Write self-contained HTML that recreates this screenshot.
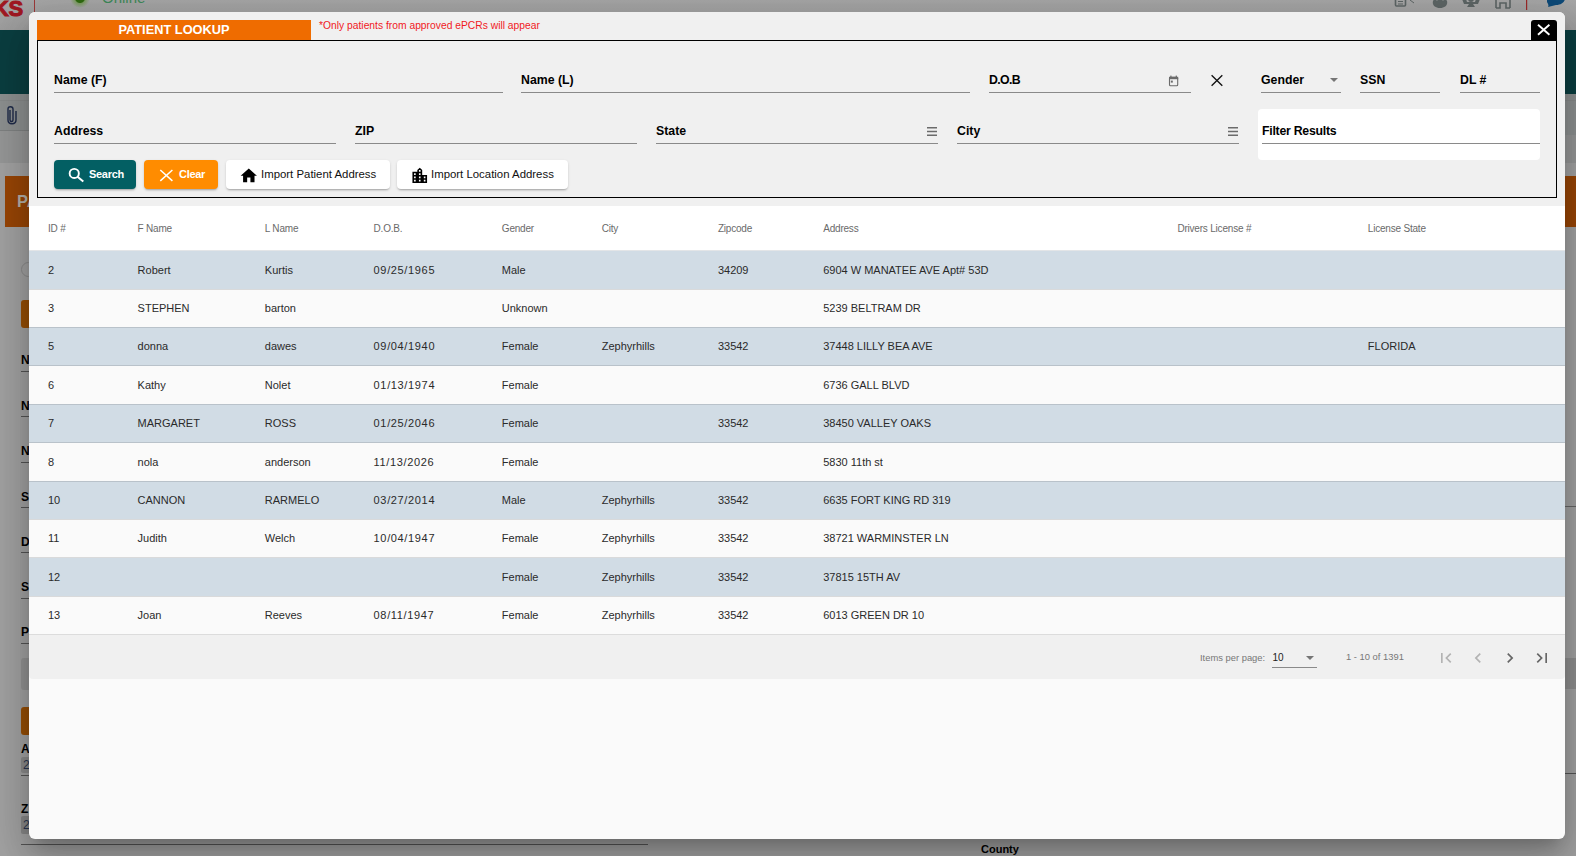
<!DOCTYPE html>
<html><head><meta charset="utf-8">
<style>
*{box-sizing:border-box;margin:0;padding:0}
html,body{width:1576px;height:856px;overflow:hidden}
body{position:relative;font-family:"Liberation Sans",sans-serif;background:#a2a2a2;color:#000}
.a{position:absolute}
.lbl{position:absolute;font-weight:bold;font-size:12.3px;line-height:14px;color:#000;white-space:nowrap}
.ul{position:absolute;height:1px;background:#8a8a8a}
.hd{position:absolute;font-size:10px;line-height:12px;color:#6a6a6a;letter-spacing:-0.2px;white-space:nowrap}
.row{position:absolute;left:29px;width:1536px}
.row.b{background:#d1dce5}
.row.w{background:#fafafa}
.c{position:absolute;font-size:11px;line-height:13px;color:#2a2a2a;white-space:nowrap}
.btn{position:absolute;top:160px;height:29px;border-radius:4px;box-shadow:0 2px 2px -1px rgba(0,0,0,.25),0 1px 3px rgba(0,0,0,.12)}
.bt{position:absolute;top:168px;font-weight:bold;font-size:11px;line-height:12px;letter-spacing:-0.3px;white-space:nowrap}
.it{position:absolute;top:168px;font-size:11.4px;line-height:12px;color:#111;white-space:nowrap}
.ic{position:absolute}
.bl{position:absolute;left:21px;font-weight:bold;font-size:12px;line-height:12px;color:#000}
.bu{position:absolute;left:21px;width:10px;height:1px;background:#555}
</style></head>
<body>
<!-- background page -->
<div id="bg">
  <div class="a" style="left:0;top:0;width:1576px;height:30px;background:linear-gradient(#a7a7a7,#9d9d9d)"></div>
  <div class="a" style="left:-7px;top:-2px;font-weight:bold;font-size:22px;line-height:22px;color:#a01822;-webkit-text-stroke:1px #a01822;letter-spacing:-0.5px">KS</div>
  <div class="a" style="left:34px;top:0;width:1px;height:14px;background:#9c3a3a"></div>
  <div class="a" style="left:70px;top:-12px;width:20px;height:20px;border-radius:50%;background:radial-gradient(circle,#2f6a10 0,#2f6a10 4.5px,rgba(90,150,40,.5) 5.5px,rgba(160,160,160,0) 10px)"></div>
  <div class="a" style="left:102px;top:-10px;font-size:15px;line-height:15px;color:#3f8a5a">Online</div>
  <svg class="a" style="left:1390px;top:0" width="180" height="10" viewBox="0 0 180 10">
    <rect x="5.5" y="-2" width="10" height="8" rx="1" fill="none" stroke="#5d6565" stroke-width="1.6"/><path d="M8 1.5h5M8 4h5" stroke="#5d6565" stroke-width="1.2"/>
    <path d="M20 0l4 3" stroke="#5d6565" stroke-width="1"/>
    <path d="M50 8c-5 0-8-3-7-7l2-3 2 3 3-5 3 5 2-3 2 3c1 4-2 7-7 7z" fill="#5d6565"/>
    <path d="M72 -1h4l1 3h8l1-3h4l-2 5h-5l2 3h-8l2-3h-5z" fill="#5d6565"/><circle cx="81" cy="-1" r="3" fill="#5d6565"/>
    <path d="M106 8v-9M120 8v-9M106 8h4v-5h6v5h4" fill="none" stroke="#5d6565" stroke-width="1.6"/>
    <rect x="136" y="0" width="1.2" height="12" fill="#9c2a2a"/>
    <path d="M157 -4h18c1 4-2 9-9 9l-8 2c1-2 0-3-1-5z" fill="#0e4a78"/>
  </svg>
  <div class="a" style="left:0;top:30px;width:1576px;height:64px;background:#0b3e40"></div>
  <div class="a" style="left:0;top:94px;width:1576px;height:36px;background:#8d9090"></div>
  <div class="a" style="left:0;top:100px;width:1576px;height:1px;background:#878a8a"></div>
  <div class="a" style="left:0;top:130px;width:1576px;height:1px;background:#7f8282"></div>
  <svg class="a" style="left:5px;top:105px" width="13" height="21" viewBox="0 0 13 21"><path d="M5 5v10c0 2 3 2 3 0V4c0-3-5-3-5 0v11c0 5 8 5 8 0V6" fill="none" stroke="#1e2a48" stroke-width="1.4"/></svg>
  <div class="a" style="left:0;top:131px;width:1576px;height:32px;background:#969797"></div>
  <div class="a" style="left:5px;top:176px;width:30px;height:51px;background:#984506"></div>
  <div class="a" style="left:17px;top:193px;font-weight:bold;font-size:16.5px;line-height:16.5px;color:#b5b0a8">PA</div>
  <div class="a" style="left:1565px;top:176px;width:20px;height:51px;background:#984506"></div>
  <div class="a" style="left:1565px;top:130px;width:11px;height:5px;background:#8d9090"></div>
  <div class="a" style="left:21px;top:262px;width:15px;height:15px;border-radius:50%;border:1.5px solid #8a8a8a"></div>
  <div class="a" style="left:21px;top:300px;width:20px;height:28px;background:#964e06;border-radius:3px"></div>
  <div class="bl" style="top:354px">N</div><div class="bu" style="top:371px"></div>
  <div class="bl" style="top:399.5px">N</div><div class="bu" style="top:416px"></div>
  <div class="bl" style="top:445.3px">N</div><div class="bu" style="top:462px"></div>
  <div class="bl" style="top:490.5px">S</div><div class="bu" style="top:507px"></div>
  <div class="bl" style="top:536.2px">D</div><div class="bu" style="top:552px"></div>
  <div class="bl" style="top:581.2px">S</div><div class="bu" style="top:598px"></div>
  <div class="bl" style="top:626.4px">P</div><div class="bu" style="top:643px"></div>
  <div class="a" style="left:21px;top:658px;width:20px;height:32px;background:#929292;border-radius:3px"></div>
  <div class="a" style="left:21px;top:707px;width:20px;height:28px;background:#964e06;border-radius:3px"></div>
  <div class="bl" style="top:742.8px">A</div>
  <div class="a" style="left:21px;top:757px;width:20px;height:16px;background:#8a8a8a;border-radius:2px"></div>
  <div class="a" style="left:23px;top:758px;font-size:12px;line-height:14px;color:#2a3550">2</div>
  <div class="bu" style="top:774.5px"></div>
  <div class="bl" style="top:802.6px">Z</div>
  <div class="a" style="left:21px;top:816px;width:20px;height:18px;background:#868686;border-radius:2px"></div>
  <div class="a" style="left:23px;top:818px;font-size:12px;line-height:14px;color:#2a3550">2</div>
  <div class="a" style="left:21px;top:844px;width:627px;height:1px;background:#555"></div>
  <div class="a" style="left:981px;top:843px;font-weight:bold;font-size:11px;line-height:13px;color:#000">County</div>
  <div class="a" style="left:1565px;top:658px;width:11px;height:31px;background:#8e8e8e"></div>
  <div class="a" style="left:1565px;top:773px;width:11px;height:1px;background:#555"></div>
  <div class="a" style="left:1565px;top:506px;width:11px;height:1px;background:#666"></div>
</div>

<!-- modal -->
<div class="a" id="modal" style="left:29px;top:12px;width:1536px;height:827px;background:#fafafa;border-radius:6px;box-shadow:0 11px 15px -7px rgba(0,0,0,.2),0 24px 38px 3px rgba(0,0,0,.14),0 9px 46px 8px rgba(0,0,0,.12)"></div>
<div class="a" style="left:29px;top:12px;width:1536px;height:194px;background:#f0f0f0;border-radius:6px 6px 0 0"></div>

<!-- title -->
<div class="a" style="left:37px;top:20px;width:274px;height:20px;background:#ef6c00;color:#fff;font-weight:bold;font-size:12.8px;line-height:20px;text-align:center">PATIENT LOOKUP</div>
<div class="a" style="left:319px;top:19px;font-size:10.3px;line-height:13px;color:#f01a24;white-space:nowrap">*Only patients from approved ePCRs will appear</div>
<div class="a" style="left:1531px;top:20px;width:26px;height:20px;background:#000;border-radius:3px 3px 0 0"></div>
<svg class="a" style="left:1531px;top:20px" width="26" height="20" viewBox="0 0 26 20"><path d="M7 4.7 L18.4 14.7 M18.4 4.7 L7 14.7" stroke="#fff" stroke-width="1.9" fill="none"/></svg>

<!-- form box -->
<div class="a" style="left:37px;top:40px;width:1520px;height:158px;border:1.3px solid #000"></div>

<!-- row 1 fields -->
<div class="lbl" style="left:54px;top:73px">Name (F)</div><div class="ul" style="left:54px;top:92px;width:449px"></div>
<div class="lbl" style="left:521px;top:73px">Name (L)</div><div class="ul" style="left:521px;top:92px;width:449px"></div>
<div class="lbl" style="left:989px;top:73px;letter-spacing:-0.65px">D.O.B</div><div class="ul" style="left:989px;top:92px;width:202px"></div>
<div class="lbl" style="left:1261px;top:73px">Gender</div><div class="ul" style="left:1261px;top:92px;width:80px"></div>
<div class="lbl" style="left:1360px;top:73px">SSN</div><div class="ul" style="left:1360px;top:92px;width:80px"></div>
<div class="lbl" style="left:1460px;top:73px">DL #</div><div class="ul" style="left:1460px;top:92px;width:80px"></div>

<!-- row 2 fields -->
<div class="lbl" style="left:54px;top:124px">Address</div><div class="ul" style="left:54px;top:143px;width:282px"></div>
<div class="lbl" style="left:355px;top:124px">ZIP</div><div class="ul" style="left:355px;top:143px;width:282px"></div>
<div class="lbl" style="left:656px;top:124px">State</div><div class="ul" style="left:656px;top:143px;width:282px"></div>
<div class="lbl" style="left:957px;top:124px">City</div><div class="ul" style="left:957px;top:143px;width:282px"></div>
<div class="a" style="left:1258px;top:109px;width:282px;height:51px;background:#fff;border-radius:4px"></div>
<div class="lbl" style="left:1262px;top:124px;letter-spacing:-0.25px">Filter Results</div><div class="ul" style="left:1262px;top:143px;width:278px"></div>


<!-- field icons -->
<svg class="a" style="left:1168px;top:74.6px" width="11" height="12" viewBox="0 0 11 12"><rect x="1.5" y="2.2" width="8.2" height="8.6" rx="1" fill="none" stroke="#6b6b6b" stroke-width="1.1"/><rect x="1" y="1.8" width="9.2" height="2.4" fill="#6b6b6b"/><rect x="2.3" y="0.6" width="1.2" height="2" fill="#6b6b6b"/><rect x="7.7" y="0.6" width="1.2" height="2" fill="#6b6b6b"/><rect x="2.8" y="5.6" width="2" height="2" fill="#6b6b6b"/></svg>
<svg class="a" style="left:1210px;top:74px" width="14" height="13" viewBox="0 0 14 13"><path d="M1.6 1.3 L12.3 11.7 M12.3 1.3 L1.6 11.7" stroke="#111" stroke-width="1.35" fill="none"/></svg>
<div class="a" style="left:1329.5px;top:77.7px;width:0;height:0;border-left:4.3px solid transparent;border-right:4.3px solid transparent;border-top:4.4px solid #757575"></div>
<svg class="a" style="left:926px;top:126px" width="12" height="11" viewBox="0 0 12 11"><path d="M1 1.7H11M1 5.5H11M1 9.2H11" stroke="#6b6b6b" stroke-width="1.5"/></svg>
<svg class="a" style="left:1227px;top:126px" width="12" height="11" viewBox="0 0 12 11"><path d="M1 1.7H11M1 5.5H11M1 9.2H11" stroke="#6b6b6b" stroke-width="1.5"/></svg>
<!-- buttons -->
<div class="btn" style="left:54px;width:82px;background:#035f63"></div>
<div class="btn" style="left:144px;width:74px;background:#ff8c00"></div>
<div class="btn" style="left:226px;width:164px;background:#fff"></div>
<div class="btn" style="left:397px;width:171px;background:#fff"></div>
<svg class="a" style="left:66px;top:166px" width="20" height="18" viewBox="0 0 20 18"><circle cx="8.25" cy="7.45" r="4.6" fill="none" stroke="#fff" stroke-width="1.9"/><path d="M11.5 10.7 L17.3 15.6" stroke="#fff" stroke-width="2" fill="none"/></svg>
<div class="bt" style="left:89px;color:#fff">Search</div>
<svg class="a" style="left:158px;top:168px" width="16" height="15" viewBox="0 0 16 15"><path d="M2.3 2 L14.4 12.9 M14.4 2 L2.3 12.9" stroke="#fff" stroke-width="1.5" fill="none"/></svg>
<div class="bt" style="left:179px;color:#fff">Clear</div>
<svg class="a" style="left:238.5px;top:165.9px" width="19.6" height="19.6" viewBox="0 0 24 24"><path d="M10 20v-6h4v6h5v-8h3L12 3 2 12h3v8z" fill="#000"/></svg>
<div class="it" style="left:261px">Import Patient Address</div>
<svg class="a" style="left:409.7px;top:166.4px" width="19.5" height="19.5" viewBox="0 0 24 24"><path d="M15 11V5l-3-3-3 3v2H3v14h18V11h-6zm-8 8H5v-2h2v2zm0-4H5v-2h2v2zm0-4H5V9h2v2zm6 8h-2v-2h2v2zm0-4h-2v-2h2v2zm0-4h-2V9h2v2zm0-4h-2V5h2v2zm6 12h-2v-2h2v2zm0-4h-2v-2h2v2z" fill="#000"/></svg>
<div class="it" style="left:431px">Import Location Address</div>

<!-- table header -->
<div class="a" style="left:29px;top:206px;width:1536px;height:44.3px;background:#fff"></div>

<!-- header cells -->
<div class="hd" style="left:48px;top:223px">ID #</div>
<div class="hd" style="left:137.6px;top:223px">F Name</div>
<div class="hd" style="left:264.8px;top:223px">L Name</div>
<div class="hd" style="left:373.6px;top:223px">D.O.B.</div>
<div class="hd" style="left:501.8px;top:223px">Gender</div>
<div class="hd" style="left:601.7px;top:223px">City</div>
<div class="hd" style="left:717.9px;top:223px">Zipcode</div>
<div class="hd" style="left:823.2px;top:223px">Address</div>
<div class="hd" style="left:1177.4px;top:223px">Drivers License #</div>
<div class="hd" style="left:1367.8px;top:223px">License State</div>
<div class="a" style="left:29px;top:250px;width:1536px;height:1px;background:#e3e5e7"></div>
<div class="row b" style="top:251px;height:38px"></div>
<div class="a" style="left:29px;top:289px;width:1536px;height:1px;background:#d9dadb"></div>
<div class="c" style="left:48px;top:263.8px">2</div>
<div class="c" style="left:137.6px;top:263.8px">Robert</div>
<div class="c" style="left:264.8px;top:263.8px">Kurtis</div>
<div class="c" style="left:373.6px;top:263.8px;letter-spacing:0.65px">09/25/1965</div>
<div class="c" style="left:501.8px;top:263.8px">Male</div>
<div class="c" style="left:717.9px;top:263.8px">34209</div>
<div class="c" style="left:823.2px;top:263.8px">6904 W MANATEE AVE Apt# 53D</div>
<div class="row w" style="top:290px;height:37px"></div>
<div class="a" style="left:29px;top:327px;width:1536px;height:1px;background:#b9c2ca"></div>
<div class="c" style="left:48px;top:302.3px">3</div>
<div class="c" style="left:137.6px;top:302.3px">STEPHEN</div>
<div class="c" style="left:264.8px;top:302.3px">barton</div>
<div class="c" style="left:501.8px;top:302.3px">Unknown</div>
<div class="c" style="left:823.2px;top:302.3px">5239 BELTRAM DR</div>
<div class="row b" style="top:328px;height:37px"></div>
<div class="a" style="left:29px;top:365px;width:1536px;height:1px;background:#b9c2ca"></div>
<div class="c" style="left:48px;top:340.3px">5</div>
<div class="c" style="left:137.6px;top:340.3px">donna</div>
<div class="c" style="left:264.8px;top:340.3px">dawes</div>
<div class="c" style="left:373.6px;top:340.3px;letter-spacing:0.65px">09/04/1940</div>
<div class="c" style="left:501.8px;top:340.3px">Female</div>
<div class="c" style="left:601.7px;top:340.3px">Zephyrhills</div>
<div class="c" style="left:717.9px;top:340.3px">33542</div>
<div class="c" style="left:823.2px;top:340.3px">37448 LILLY BEA AVE</div>
<div class="c" style="left:1367.8px;top:340.3px">FLORIDA</div>
<div class="row w" style="top:366px;height:38px"></div>
<div class="a" style="left:29px;top:404px;width:1536px;height:1px;background:#b9c2ca"></div>
<div class="c" style="left:48px;top:378.8px">6</div>
<div class="c" style="left:137.6px;top:378.8px">Kathy</div>
<div class="c" style="left:264.8px;top:378.8px">Nolet</div>
<div class="c" style="left:373.6px;top:378.8px;letter-spacing:0.65px">01/13/1974</div>
<div class="c" style="left:501.8px;top:378.8px">Female</div>
<div class="c" style="left:823.2px;top:378.8px">6736 GALL BLVD</div>
<div class="row b" style="top:405px;height:37px"></div>
<div class="a" style="left:29px;top:442px;width:1536px;height:1px;background:#b9c2ca"></div>
<div class="c" style="left:48px;top:417.3px">7</div>
<div class="c" style="left:137.6px;top:417.3px">MARGARET</div>
<div class="c" style="left:264.8px;top:417.3px">ROSS</div>
<div class="c" style="left:373.6px;top:417.3px;letter-spacing:0.65px">01/25/2046</div>
<div class="c" style="left:501.8px;top:417.3px">Female</div>
<div class="c" style="left:717.9px;top:417.3px">33542</div>
<div class="c" style="left:823.2px;top:417.3px">38450 VALLEY OAKS</div>
<div class="row w" style="top:443px;height:38px"></div>
<div class="a" style="left:29px;top:481px;width:1536px;height:1px;background:#b9c2ca"></div>
<div class="c" style="left:48px;top:455.8px">8</div>
<div class="c" style="left:137.6px;top:455.8px">nola</div>
<div class="c" style="left:264.8px;top:455.8px">anderson</div>
<div class="c" style="left:373.6px;top:455.8px;letter-spacing:0.65px">11/13/2026</div>
<div class="c" style="left:501.8px;top:455.8px">Female</div>
<div class="c" style="left:823.2px;top:455.8px">5830 11th st</div>
<div class="row b" style="top:482px;height:37px"></div>
<div class="a" style="left:29px;top:519px;width:1536px;height:1px;background:#d9dadb"></div>
<div class="c" style="left:48px;top:494.3px">10</div>
<div class="c" style="left:137.6px;top:494.3px">CANNON</div>
<div class="c" style="left:264.8px;top:494.3px">RARMELO</div>
<div class="c" style="left:373.6px;top:494.3px;letter-spacing:0.65px">03/27/2014</div>
<div class="c" style="left:501.8px;top:494.3px">Male</div>
<div class="c" style="left:601.7px;top:494.3px">Zephyrhills</div>
<div class="c" style="left:717.9px;top:494.3px">33542</div>
<div class="c" style="left:823.2px;top:494.3px">6635 FORT KING RD 319</div>
<div class="row w" style="top:520px;height:37px"></div>
<div class="a" style="left:29px;top:557px;width:1536px;height:1px;background:#d9dadb"></div>
<div class="c" style="left:48px;top:532.3px">11</div>
<div class="c" style="left:137.6px;top:532.3px">Judith</div>
<div class="c" style="left:264.8px;top:532.3px">Welch</div>
<div class="c" style="left:373.6px;top:532.3px;letter-spacing:0.65px">10/04/1947</div>
<div class="c" style="left:501.8px;top:532.3px">Female</div>
<div class="c" style="left:601.7px;top:532.3px">Zephyrhills</div>
<div class="c" style="left:717.9px;top:532.3px">33542</div>
<div class="c" style="left:823.2px;top:532.3px">38721 WARMINSTER LN</div>
<div class="row b" style="top:558px;height:38px"></div>
<div class="a" style="left:29px;top:596px;width:1536px;height:1px;background:#d9dadb"></div>
<div class="c" style="left:48px;top:570.8px">12</div>
<div class="c" style="left:501.8px;top:570.8px">Female</div>
<div class="c" style="left:601.7px;top:570.8px">Zephyrhills</div>
<div class="c" style="left:717.9px;top:570.8px">33542</div>
<div class="c" style="left:823.2px;top:570.8px">37815 15TH AV</div>
<div class="row w" style="top:597px;height:37px"></div>
<div class="c" style="left:48px;top:609.3px">13</div>
<div class="c" style="left:137.6px;top:609.3px">Joan</div>
<div class="c" style="left:264.8px;top:609.3px">Reeves</div>
<div class="c" style="left:373.6px;top:609.3px;letter-spacing:0.65px">08/11/1947</div>
<div class="c" style="left:501.8px;top:609.3px">Female</div>
<div class="c" style="left:601.7px;top:609.3px">Zephyrhills</div>
<div class="c" style="left:717.9px;top:609.3px">33542</div>
<div class="c" style="left:823.2px;top:609.3px">6013 GREEN DR 10</div>

<!-- footer -->
<div class="a" style="left:29px;top:634px;width:1536px;height:45.4px;background:#f0f0f0;border-top:1px solid #dcdcdc;border-radius:0 0 4px 4px"></div>

<div class="a" style="left:1200px;top:651.5px;font-size:9.4px;line-height:12px;color:#777;white-space:nowrap">Items per page:</div>
<div class="a" style="left:1272.5px;top:651.5px;font-size:10px;line-height:12px;color:#222;white-space:nowrap">10</div>
<div class="a" style="left:1272px;top:667px;width:45px;height:1px;background:#8a8a8a"></div>
<div class="a" style="left:1305.5px;top:655.8px;width:0;height:0;border-left:4.2px solid transparent;border-right:4.2px solid transparent;border-top:4.3px solid #757575"></div>
<div class="a" style="left:1346px;top:650.5px;font-size:9.4px;line-height:12px;color:#777;white-space:nowrap">1 - 10 of 1391</div>
<svg class="a" style="left:1436px;top:647.9px" width="20" height="20" viewBox="0 0 24 24"><path d="M18.41 16.59L13.82 12l4.59-4.59L17 6l-6 6 6 6zM6 6h2v12H6z" fill="#b3b3b3"/></svg>
<svg class="a" style="left:1468.3px;top:647.9px" width="20" height="20" viewBox="0 0 24 24"><path d="M15.41 7.41L14 6l-6 6 6 6 1.41-1.41L10.83 12z" fill="#b3b3b3"/></svg>
<svg class="a" style="left:1499.9px;top:647.9px" width="20" height="20" viewBox="0 0 24 24"><path d="M10 6L8.59 7.41 13.17 12l-4.58 4.59L10 18l6-6z" fill="#666"/></svg>
<svg class="a" style="left:1531.7px;top:647.9px" width="20" height="20" viewBox="0 0 24 24"><path d="M5.59 7.41L10.18 12l-4.59 4.59L7 18l6-6-6-6zM16 6h2v12h-2z" fill="#666"/></svg>
</body></html>
